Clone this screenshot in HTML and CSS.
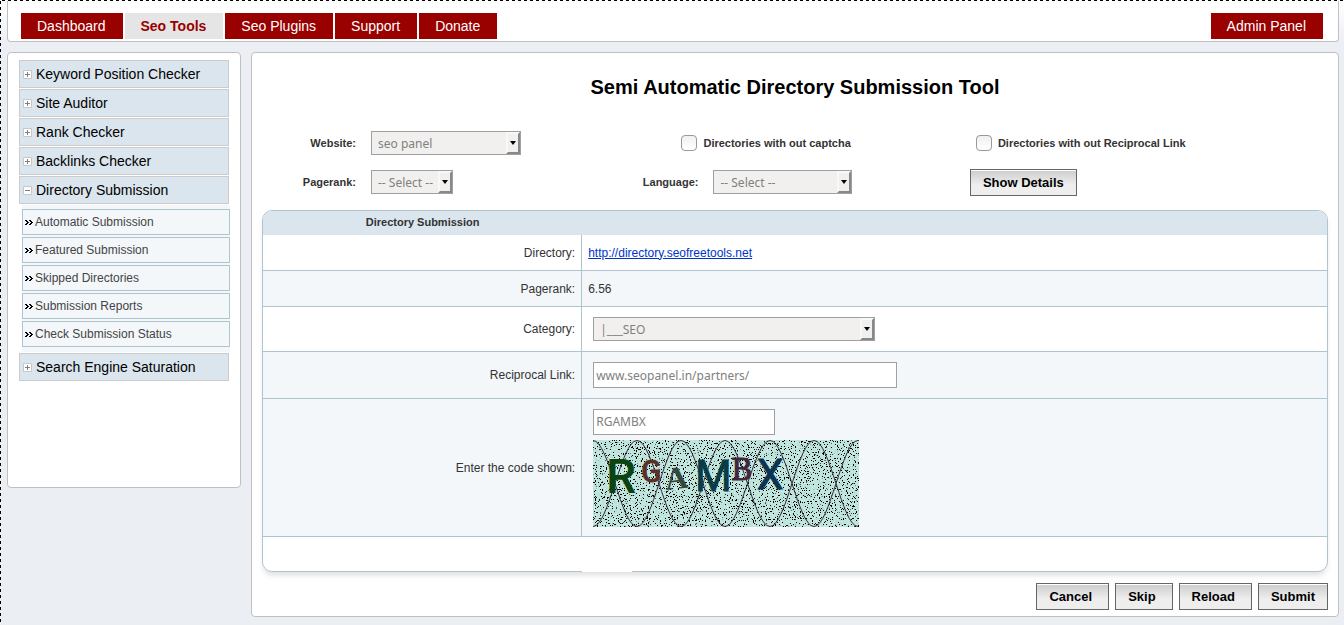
FILE: index.html
```html
<!DOCTYPE html>
<html lang="en">
<head>
<meta charset="utf-8">
<title>Semi Automatic Directory Submission Tool</title>
<link rel="stylesheet" href="styles.css">
</head>
<body>
<div class="page">
  <header class="topbar">
    <nav class="tabs">
      <a class="tab" href="#">Dashboard</a>
      <a class="tab tab-active" href="#">Seo Tools</a>
      <a class="tab" href="#">Seo Plugins</a>
      <a class="tab" href="#">Support</a>
      <a class="tab" href="#">Donate</a>
    </nav>
    <a class="tab" href="#">Admin Panel</a>
  </header>

  <div class="columns">
    <aside class="sidebar">
      <a class="menu" href="#"><svg class="toggle" viewBox="0 0 9 9"><path class="box" d="M.5.5h8v8h-8z"/><path class="sign" d="M2 4.500h5M4.500 2v5"/></svg>Keyword Position Checker</a>
      <a class="menu" href="#"><svg class="toggle" viewBox="0 0 9 9"><path class="box" d="M.5.5h8v8h-8z"/><path class="sign" d="M2 4.500h5M4.500 2v5"/></svg>Site Auditor</a>
      <a class="menu" href="#"><svg class="toggle" viewBox="0 0 9 9"><path class="box" d="M.5.5h8v8h-8z"/><path class="sign" d="M2 4.500h5M4.500 2v5"/></svg>Rank Checker</a>
      <a class="menu" href="#"><svg class="toggle" viewBox="0 0 9 9"><path class="box" d="M.5.5h8v8h-8z"/><path class="sign" d="M2 4.500h5M4.500 2v5"/></svg>Backlinks Checker</a>
      <a class="menu" href="#"><svg class="toggle" viewBox="0 0 9 9"><path class="box" d="M.5.5h8v8h-8z"/><path class="sign" d="M2 4.500h5"/></svg>Directory Submission</a>
      <div class="submenu">
        <a class="sub" href="#"><svg class="arrows" viewBox="0 0 8 5"><path d="M0 0h2v1h1v1h1v1h-1v1h-1v1h-2v-1h1v-1h1v-1h-1v-1h-1zM4 0h2v1h1v1h1v1h-1v1h-1v1h-2v-1h1v-1h1v-1h-1v-1h-1z"/></svg>Automatic Submission</a>
        <a class="sub" href="#"><svg class="arrows" viewBox="0 0 8 5"><path d="M0 0h2v1h1v1h1v1h-1v1h-1v1h-2v-1h1v-1h1v-1h-1v-1h-1zM4 0h2v1h1v1h1v1h-1v1h-1v1h-2v-1h1v-1h1v-1h-1v-1h-1z"/></svg>Featured Submission</a>
        <a class="sub" href="#"><svg class="arrows" viewBox="0 0 8 5"><path d="M0 0h2v1h1v1h1v1h-1v1h-1v1h-2v-1h1v-1h1v-1h-1v-1h-1zM4 0h2v1h1v1h1v1h-1v1h-1v1h-2v-1h1v-1h1v-1h-1v-1h-1z"/></svg>Skipped Directories</a>
        <a class="sub" href="#"><svg class="arrows" viewBox="0 0 8 5"><path d="M0 0h2v1h1v1h1v1h-1v1h-1v1h-2v-1h1v-1h1v-1h-1v-1h-1zM4 0h2v1h1v1h1v1h-1v1h-1v1h-2v-1h1v-1h1v-1h-1v-1h-1z"/></svg>Submission Reports</a>
        <a class="sub" href="#"><svg class="arrows" viewBox="0 0 8 5"><path d="M0 0h2v1h1v1h1v1h-1v1h-1v1h-2v-1h1v-1h1v-1h-1v-1h-1zM4 0h2v1h1v1h1v1h-1v1h-1v1h-2v-1h1v-1h1v-1h-1v-1h-1z"/></svg>Check Submission Status</a>
      </div>
      <a class="menu" href="#"><svg class="toggle" viewBox="0 0 9 9"><path class="box" d="M.5.5h8v8h-8z"/><path class="sign" d="M2 4.500h5M4.500 2v5"/></svg>Search Engine Saturation</a>
    </aside>

    <main class="content">
      <h1 class="title">Semi Automatic Directory Submission Tool</h1>

      <form class="filters">
        <div class="field">
          <label class="name name-first" for="website">Website:</label>
          <span class="picker picker-website"><select id="website"><option>seo panel</option></select></span>
        </div>
        <div class="field check-captcha">
          <input type="checkbox" id="nocaptcha"><label for="nocaptcha">Directories with out captcha</label>
        </div>
        <div class="field check-link">
          <input type="checkbox" id="nolink"><label for="nolink">Directories with out Reciprocal Link</label>
        </div>
        <div class="field">
          <label class="name name-first" for="pagerank">Pagerank:</label>
          <span class="picker picker-rank"><select id="pagerank"><option>-- Select --</option></select></span>
        </div>
        <div class="field">
          <label class="name name-second" for="language">Language:</label>
          <span class="picker picker-language"><select id="language"><option>-- Select --</option></select></span>
        </div>
        <div class="field field-button"><button class="button" type="button">Show Details</button></div>
      </form>

      <div class="panel">
        <table class="details">
          <thead>
            <tr><th class="key">Directory Submission</th><th></th></tr>
          </thead>
          <tbody>
            <tr class="row-line"><td class="key">Directory:</td><td><a class="link" href="#">http://directory.seofreetools.net</a></td></tr>
            <tr class="row-line shade"><td class="key">Pagerank:</td><td>6.56</td></tr>
            <tr class="row-select"><td class="key"><label for="category">Category:</label></td><td class="control"><span class="picker picker-category"><select id="category"><option>|___SEO</option></select></span></td></tr>
            <tr class="row-input shade"><td class="key"><label for="reciprocal">Reciprocal Link:</label></td><td class="control"><input class="text text-wide" type="text" id="reciprocal" value="www.seopanel.in/partners/"></td></tr>
            <tr class="row-code shade"><td class="key"><label for="code">Enter the code shown:</label></td><td class="control">
              <input class="text text-code" type="text" id="code" value="RGAMBX">
              <svg class="captcha" viewBox="0 0 266 87" role="img" aria-label="Code">
                <defs>
                  <filter id="specks" x="0" y="0" width="100%" height="100%" color-interpolation-filters="sRGB">
                    <feTurbulence type="fractalNoise" baseFrequency="0.83" numOctaves="2" seed="7"/>
                    <feColorMatrix values="0 0 0 0 0  0 0 0 0 0  0 0 0 0 0  40 0 0 0 -25"/>
                  </filter>
                  <filter id="grain" x="0" y="0" width="100%" height="100%" color-interpolation-filters="sRGB">
                    <feTurbulence type="fractalNoise" baseFrequency="0.7" numOctaves="1" seed="3"/>
                    <feColorMatrix values="0 0 0 0 1  0 0 0 0 1  0 0 0 0 1  1 0 0 0 -0.350"/>
                  </filter>
                </defs>
                <rect width="266" height="87" fill="#b4e0d7"/>
                <rect width="266" height="87" filter="url(#grain)"/>
                <rect width="266" height="87" filter="url(#specks)"/>
                <g fill="none" stroke="#35283b" stroke-width="1">
                  <path d="M0 .5C16 .5 28 86.500 44 86.500S72 .5 88 .5S116 86.500 132 86.500S161 .5 177 .5S205 86.500 221 86.500S249 .5 265 .5"/>
                  <path d="M0 86.500C16 86.500 28 .5 44 .5S72 86.500 88 86.500S116 .5 132 .5S161 86.500 177 86.500S205 .5 221 .5S249 86.500 265 86.500"/>
                </g>
                <text class="glyph-r" x="13" y="53">R</text>
                <text class="glyph-g" x="48" y="42">G</text>
                <text class="glyph-a" x="72" y="49" transform="rotate(-6 83 40)">A</text>
                <text class="glyph-m" x="102" y="51">M</text>
                <text class="glyph-b" x="138" y="40">B</text>
                <text class="glyph-x" x="164" y="49">X</text>
              </svg>
            </td></tr>
          </tbody>
        </table>
        <div class="panel-foot"></div>
      </div>

      <div class="actions">
        <button class="button" type="button">Cancel</button>
        <button class="button" type="button">Skip</button>
        <button class="button" type="button">Reload</button>
        <button class="button" type="button">Submit</button>
      </div>
    </main>
  </div>
</div>
</body>
</html>
```
FILE: styles.css
```css
*, *::before, *::after { box-sizing: border-box; }

body {
  margin: 0;
  background: #ebeff4;
  font-family: "Liberation Sans", Arial, sans-serif;
  font-size: 12px;
  color: #333;
}

.page {
  min-height: 100vh;
  padding: 1px 5px 8px 7px;
  background:
    repeating-linear-gradient(to right, transparent 0 2px, #000 2px 5px, transparent 5px 6px) top / 100% 1px no-repeat,
    repeating-linear-gradient(to bottom, transparent 0 1px, #000 1px 4px, transparent 4px 6px) left / 1px 100% no-repeat,
    linear-gradient(#fff, #ebeff4 42px);
}

.topbar {
  display: flex;
  justify-content: space-between;
  padding: 12px 15px 2px 13px;
  background: #fff;
  border: 1px solid #c0c0c0;
  border-top: 0;
  border-radius: 0 0 4px 4px;
}

.tabs { display: flex; gap: 2px; }

.tab {
  padding: 0 17px 0 16px;
  background: #900;
  color: #fff;
  font-size: 14px;
  line-height: 26px;
  text-decoration: none;
}

.tab-active {
  background: #e5e5e5;
  color: #900;
  font-weight: bold;
}

.columns {
  display: flex;
  align-items: flex-start;
  gap: 10px;
  margin-top: 10px;
}

.sidebar {
  flex: none;
  display: flex;
  flex-direction: column;
  gap: 1px;
  width: 234px;
  min-height: 436px;
  padding: 7px 11px;
  background: #fff;
  border: 1px solid #c0c0c0;
  border-radius: 4px;
}

.menu {
  display: flex;
  align-items: center;
  gap: 4px;
  padding-left: 3px;
  background: #dae5ed;
  border: 1px solid #ccc;
  color: #000;
  font-size: 14px;
  line-height: 26px;
  text-decoration: none;
  white-space: nowrap;
}

.toggle { width: 9px; height: 9px; }
.toggle .box { fill: #fff; stroke: #c8c8c8; }
.toggle .sign { fill: none; stroke: #808080; }

.submenu {
  display: flex;
  flex-direction: column;
  gap: 2px;
  margin: 0 -1px 0 3px;
  padding: 4px 0 5px;
  background: #f3f7fa;
}

.sub {
  display: flex;
  align-items: center;
  gap: 2px;
  padding-left: 2px;
  border: 1px solid #b0c4cf;
  color: #444;
  line-height: 24px;
  text-decoration: none;
}

.arrows { width: 8px; height: 5px; shape-rendering: crispEdges; }

.content {
  flex: 1;
  min-width: 0;
  padding: 22px 10px 6px;
  background: #fff;
  border: 1px solid #c0c0c0;
  border-radius: 4px;
}

.title {
  margin: 0;
  color: #000;
  font-size: 20px;
  line-height: 24px;
  text-align: center;
}

.filters {
  display: grid;
  grid-template-columns: 34fr 31fr 35fr;
  row-gap: 13px;
  margin: 31px 0 15px;
  font-size: 11px;
  font-weight: bold;
}

.field { display: flex; align-items: center; height: 26px; }
.name { margin-right: 15px; text-align: right; }
.name-first { width: 94px; }
.name-second { width: 74px; }
.check-captcha { padding-left: 57px; }
.check-link { padding-left: 21px; }
.field-button { padding-left: 15px; }

.field input {
  appearance: none;
  width: 16px;
  height: 16px;
  margin: 0 6px 0 0;
  border: 1px solid #999;
  border-radius: 4px;
  background: linear-gradient(#f0f0f0, #fff);
}

.picker { position: relative; display: inline-block; height: 24px; }

.picker select {
  appearance: none;
  width: 100%;
  height: 24px;
  padding: 1px 16px 0 6px;
  border: 1px solid #a0a0a0;
  border-radius: 0;
  background: #f1f0ee;
  color: #808080;
  font-family: "Noto Sans", sans-serif;
  font-size: 12px;
}

.picker::before {
  content: "";
  position: absolute;
  top: 1px;
  right: 1px;
  width: 14px;
  height: 22px;
  border: 2px solid;
  border-color: #f8f8f8 #888 #888 #f8f8f8;
  background: #f1f0ee;
  pointer-events: none;
}

.picker::after {
  content: "";
  position: absolute;
  top: 10px;
  right: 5px;
  border: 3px solid transparent;
  border-top: 4px solid #000;
  border-bottom: 0;
  pointer-events: none;
}

.picker-website { width: 150px; }
.picker-rank { width: 82px; }
.picker-language { width: 139px; }
.picker-category { width: 282px; }

.panel {
  border: 1px solid #b0c4cf;
  border-radius: 10px;
  box-shadow: 0 5px 6px -2px #ddd;
}

.details {
  width: 100%;
  border-spacing: 0;
  table-layout: fixed;
}

.details th {
  height: 24px;
  padding: 0 0 2px;
  background: #dae5ed;
  font-size: 11px;
}

.details th:first-child { border-top-left-radius: 9px; }
.details th:last-child { border-top-right-radius: 9px; }

.details td {
  padding: 0 6px;
  border-bottom: 1px solid #b0c4cf;
}

.key { width: 30%; }
.details td.key { border-right: 1px solid #b0c4cf; text-align: right; }
.details td.control { padding-left: 11px; }
.shade { background: #f3f7fa; }
.row-line { height: 36px; }
.row-select { height: 45px; }
.row-input { height: 47px; }
.row-code { height: 138px; }
.row-select .picker { display: block; }
.link { color: #03c; }

.text {
  display: block;
  height: 26px;
  padding: 0 2px;
  border: 1px solid #a0a0a0;
  background: #fff;
  color: #808080;
  font-family: "Noto Sans", sans-serif;
  font-size: 12px;
}

.text-wide { width: 304px; }
.text-code { width: 182px; margin-bottom: 5px; }

.captcha { display: block; width: 266px; height: 87px; }
.glyph-r { font: 500 48px Roboto, sans-serif; fill: #0b4410; }
.glyph-g { font: 34px "Liberation Mono", monospace; fill: #5c3024; stroke: #5c3024; }
.glyph-a { font: bold 32px "Liberation Serif", serif; fill: #34473b; }
.glyph-m { font: 44px "Liberation Sans", sans-serif; fill: #083c46; stroke: #083c46; }
.glyph-b { font: 29px "DejaVu Serif", serif; fill: #43263a; stroke: #43263a; }
.glyph-x { font: 42px Roboto, sans-serif; fill: #0c3350; stroke: #0c3350; }

.panel-foot { position: relative; height: 34px; }

/* Break in the bottom border, under the value column */
.panel-foot::after {
  content: "";
  position: absolute;
  left: 30%;
  bottom: -1px;
  width: 50px;
  height: 1px;
  background: #fff;
}

.actions {
  display: flex;
  justify-content: flex-end;
  gap: 6px;
  margin-top: 11px;
}

.button {
  height: 27px;
  padding: 0 12px;
  border: 1px solid #666;
  border-radius: 0;
  background: linear-gradient(#ccc, #eee 60%);
  box-shadow: inset 0 1px #fff;
  color: #000;
  font-family: "Liberation Sans", Arial, sans-serif;
  font-size: 13px;
  font-weight: bold;
}

.actions .button:not(:last-child) { padding-right: 16px; }
```
